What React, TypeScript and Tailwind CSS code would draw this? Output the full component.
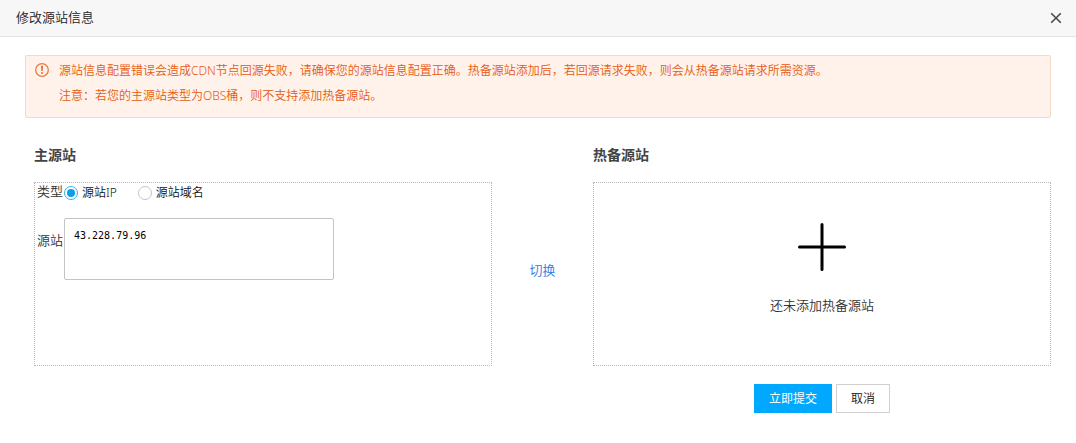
import React, { useState } from "react";

type OriginType = "ip" | "domain";

const originTypes: { value: OriginType; label: string }[] = [
  { value: "ip", label: "源站IP" },
  { value: "domain", label: "源站域名" },
];

const WarningIcon: React.FC = () => (
  <svg viewBox="0 0 14 14" className="mt-[5px] size-[14px] shrink-0" aria-hidden="true">
    <circle cx="7" cy="7" r="6.3" fill="none" stroke="#ee7a42" strokeWidth="1.3" />
    <path d="M6 2.8h2l-.3 5.2H6.3z" fill="#ee6a30" />
    <circle cx="7" cy="10" r="1" fill="#ee6a30" />
  </svg>
);

const Header: React.FC = () => (
  <header className="flex h-[37px] items-center justify-between border-b border-[#e4e4e4] bg-[#f7f7f7] pr-[14px] pl-4">
    <h1 className="pb-[2px] text-[13px] leading-5 text-[#222]">修改源站信息</h1>
    <button type="button" aria-label="关闭" className="cursor-pointer">
      <svg viewBox="0 0 12 12" className="size-3" aria-hidden="true">
        <path d="M1.2 1.2l9.6 9.6M10.8 1.2l-9.6 9.6" fill="none" stroke="#4a4a4a" strokeWidth="1.6" />
      </svg>
    </button>
  </header>
);

const Notice: React.FC = () => (
  <div
    role="alert"
    className="mx-[25px] flex gap-[10px] rounded-[2px] border border-[#f5d9c8] bg-[#fff2ea] px-[9px] pt-[2px] pb-[9px] text-xs leading-[25px] text-[#e65a10]"
  >
    <WarningIcon />
    <div>
      <p>源站信息配置错误会造成CDN节点回源失败，请确保您的源站信息配置正确。热备源站添加后，若回源请求失败，则会从热备源站请求所需资源。</p>
      <p>注意：若您的主源站类型为OBS桶，则不支持添加热备源站。</p>
    </div>
  </div>
);

export default function App() {
  const [type, setType] = useState<OriginType>("ip");
  const [origin, setOrigin] = useState("43.228.79.96");

  return (
    <div className="bg-white font-['Noto_Sans','Noto_Sans_CJK_SC',sans-serif] text-[13px] leading-5 font-[350] text-[#333]">
      <Header />
      <main className="pt-[18px]">
        <Notice />

        <form
          className="grid grid-cols-[1fr_101px_1fr] pt-[27px] pr-[25px] pl-[34px]"
          onSubmit={(e) => e.preventDefault()}
        >
          <h2 className="text-sm leading-5 font-bold text-[#444]">主源站</h2>
          <h2 className="col-start-3 text-sm leading-5 font-bold text-[#444]">热备源站</h2>

          {/* 主源站 */}
          <section className="mt-[17px] min-h-[184px] border border-dotted border-[#b8b8b8] pl-[2px]">
            <div className="flex">
              <span id="type-label" className="w-[27px] shrink-0 leading-4">类型</span>
              <div role="radiogroup" aria-labelledby="type-label" className="flex gap-[21px] pt-[2px]">
                {originTypes.map((t) => (
                  <label key={t.value} className="flex items-center gap-1 text-xs leading-4 text-[#111]">
                    <input
                      type="radio"
                      name="origin-type"
                      value={t.value}
                      checked={type === t.value}
                      onChange={() => setType(t.value)}
                      className="grid size-[14px] appearance-none place-items-center rounded-full border border-[#c4c4c4] bg-white before:size-2 before:rounded-full before:content-[''] checked:border-[#35aee8] checked:before:bg-[#0a9fe8]"
                    />
                    {t.label}
                  </label>
                ))}
              </div>
            </div>
            <div className="mt-[17px] flex">
              <label htmlFor="origin" className="w-[27px] shrink-0 pt-3">源站</label>
              <textarea
                id="origin"
                value={origin}
                onChange={(e) => setOrigin(e.target.value)}
                className="h-[62px] w-[270px] resize-none rounded-[2px] border border-[#c4c4c4] bg-white px-[9px] py-[7px] font-['DejaVu_Sans_Mono',monospace] text-[10px] leading-5 text-black"
              />
            </div>
          </section>

          <div className="flex items-center justify-center pt-2">
            <button type="button" className="cursor-pointer text-[#2b78e4]">切换</button>
          </div>

          {/* 热备源站 */}
          <section className="mt-[17px] border border-dotted border-[#b8b8b8]">
            <button type="button" className="flex size-full cursor-pointer flex-col items-center pt-10">
              <svg viewBox="0 0 48 48" className="size-12" aria-hidden="true">
                <path d="M24 1.5v45M1.5 24h45" fill="none" stroke="#000" strokeWidth="3" strokeLinecap="round" />
              </svg>
              <span className="mt-6">还未添加热备源站</span>
            </button>
          </section>

          <div className="col-start-3 mt-[18px] flex justify-center gap-1 text-xs">
            <button type="submit" className="h-[29px] cursor-pointer bg-[#00a9ff] px-[15px] font-normal text-white">
              立即提交
            </button>
            <button type="button" className="h-[29px] cursor-pointer border border-[#d0d0d0] bg-white px-[14px] text-[#111]">
              取消
            </button>
          </div>
        </form>
      </main>
    </div>
  );
}
